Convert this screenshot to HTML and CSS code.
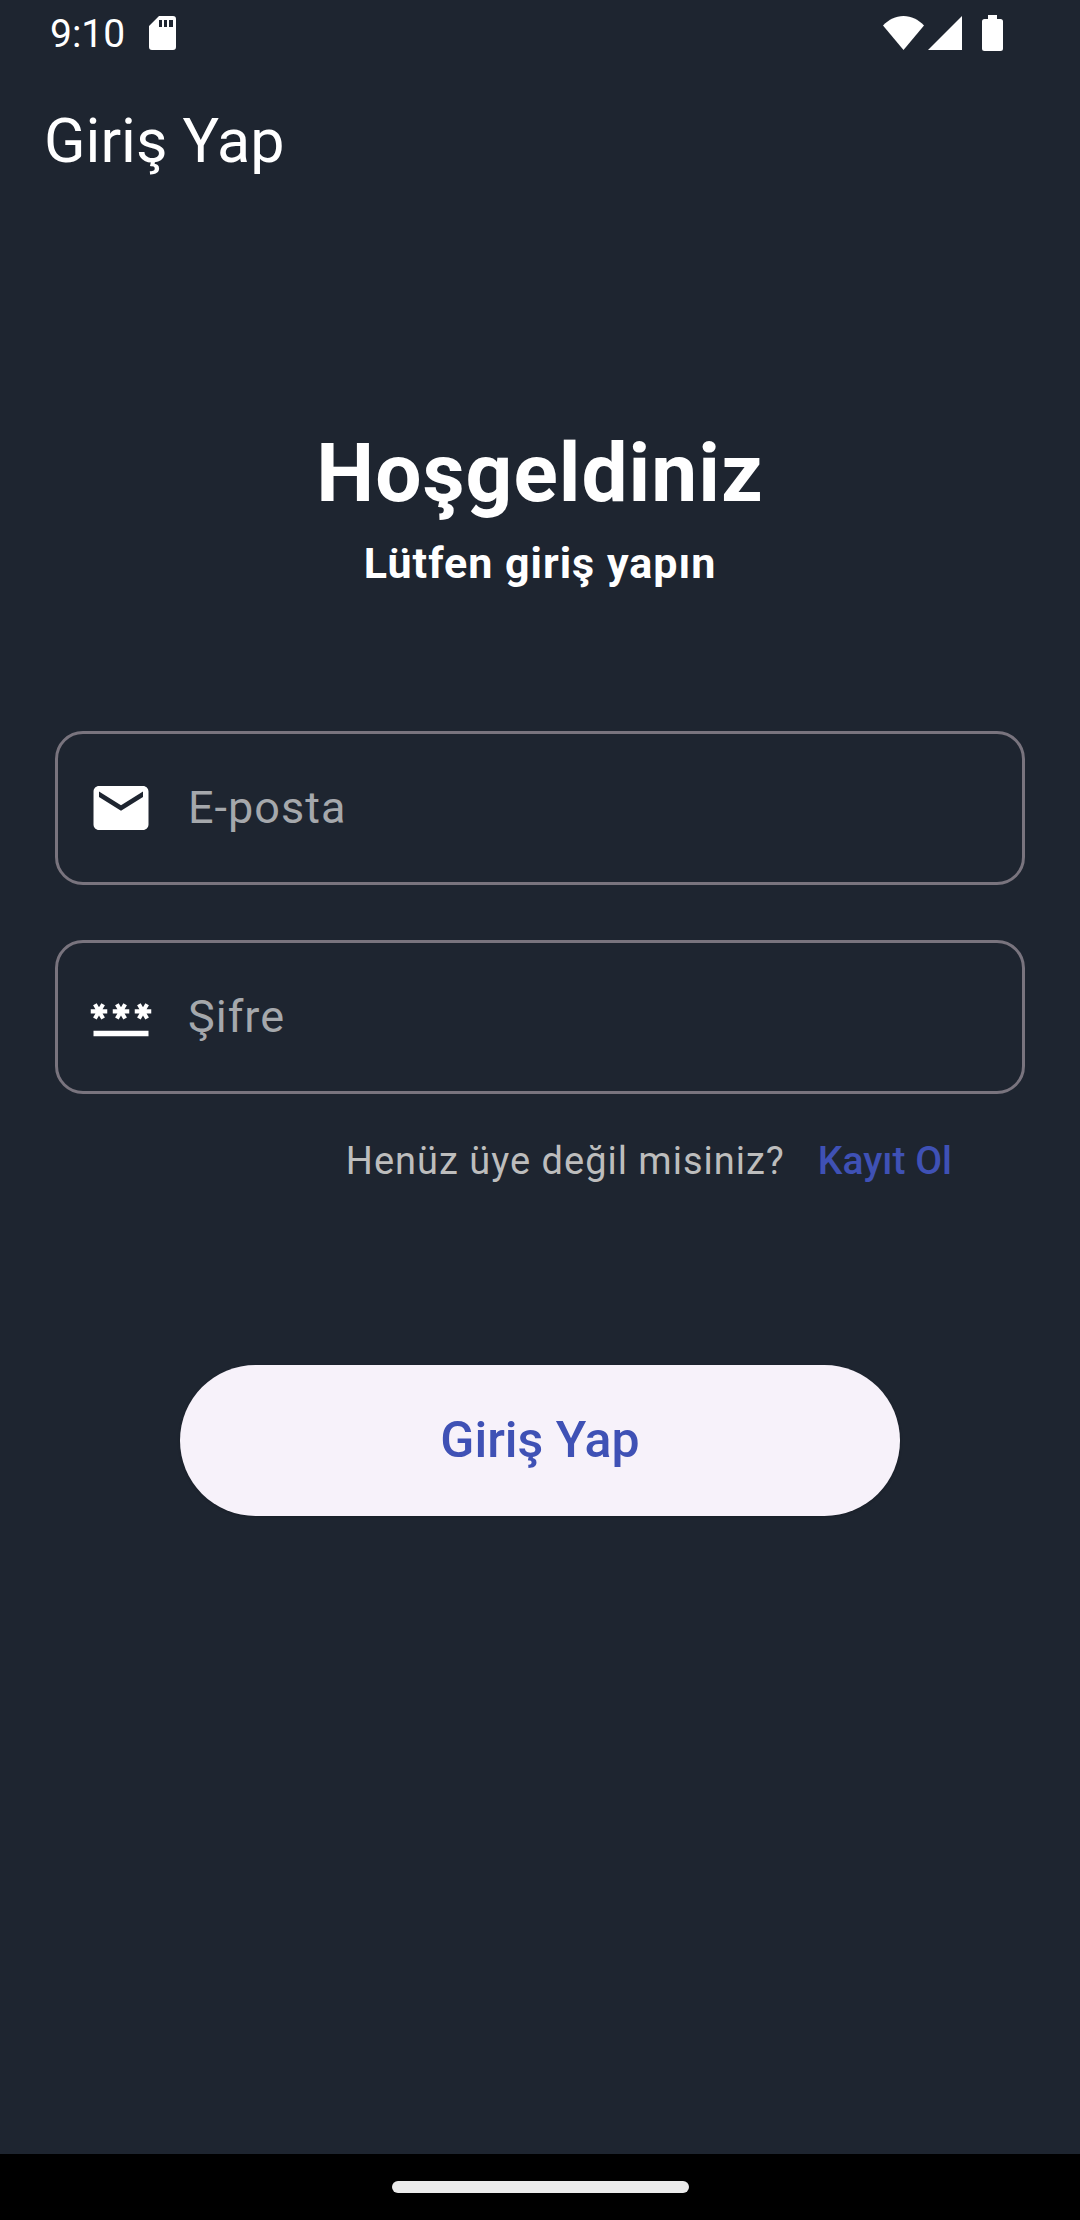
FILE: index.html
```html
<!DOCTYPE html>
<html lang="tr">
<head>
  <meta charset="utf-8">
  <meta name="viewport" content="width=device-width, initial-scale=1">
  <title>Giriş Yap</title>
  <link rel="stylesheet" href="styles.css">
</head>
<body>
  <div class="screen">
    <div class="status-bar">
      <div class="status-left">
        <span class="clock">9:10</span>
        <svg class="icon-sd" viewBox="0 0 27 34" aria-hidden="true">
          <path fill="currentColor" fill-rule="evenodd" d="M10 0H24Q27 0 27 3V31Q27 34 24 34H3Q0 34 0 31V10ZM10 4V11H13V4ZM15 4V11H18V4ZM20 4V11H24V4Z"/>
        </svg>
      </div>
      <div class="status-right">
        <svg class="icon-wifi" viewBox="0 0 41 34" aria-hidden="true">
          <path fill="currentColor" d="M20.500 34L0 9.500C6 3.500 12.500 0 20.500 0S35 3.500 41 9.500Z"/>
        </svg>
        <svg class="icon-signal" viewBox="0 0 34 34" aria-hidden="true">
          <path fill="currentColor" d="M0 34L34 0V34Z"/>
        </svg>
        <svg class="icon-battery" viewBox="0 0 21 36" aria-hidden="true">
          <path fill="currentColor" d="M6 0H15V4H18.500Q21 4 21 6.500V33.500Q21 36 18.500 36H2.500Q0 36 0 33.500V6.500Q0 4 2.500 4H6Z"/>
        </svg>
      </div>
    </div>

    <header class="app-bar">
      <span class="app-title">Giriş Yap</span>
    </header>

    <main class="content">
      <h1 class="welcome">Hoşgeldiniz</h1>
      <p class="subtitle">Lütfen giriş yapın</p>

      <form class="login-form">
        <label class="field">
          <svg class="field-icon" viewBox="0 0 24 24" role="img" aria-label="E-posta">
            <path fill="currentColor" d="M20 4H4c-1.100 0-1.990.9-1.990 2L2 18c0 1.100.9 2 2 2h16c1.100 0 2-.9 2-2V6c0-1.100-.9-2-2-2zm0 4l-8 5-8-5V6l8 5 8-5v2z"/>
          </svg>
          <input class="field-input" type="email" placeholder="E-posta">
        </label>
        <label class="field">
          <svg class="field-icon" viewBox="0 0 24 24" role="img" aria-label="Şifre">
            <path fill="currentColor" d="M2 17h20v2H2v-2zm1.150-4.050L4 11.470l.85 1.480 1.300-.75-.85-1.480H7v-1.500H5.300l.85-1.470L4.850 7 4 8.470 3.150 7l-1.300.75.85 1.470H1v1.500h1.700l-.85 1.480 1.300.75zm6.700-.75l1.300.75.85-1.480.85 1.480 1.300-.75-.85-1.480H15v-1.500h-1.700l.85-1.470-1.300-.75L12 8.470 11.150 7l-1.300.75.85 1.470H9v1.500h1.700l-.85 1.480zM23 9.220h-1.700l.85-1.470-1.300-.75L20 8.470 19.150 7l-1.300.75.85 1.470H17v1.500h1.700l-.85 1.480 1.300.75.85-1.480.85 1.480 1.300-.75-.85-1.480H23v-1.500z"/>
          </svg>
          <input class="field-input" type="password" placeholder="Şifre">
        </label>
        <p class="signup">
          <span>Henüz üye değil misiniz?</span>
          <a class="signup-link" href="#">Kayıt Ol</a>
        </p>
        <button class="submit" type="submit">Giriş Yap</button>
      </form>
    </main>

    <div class="nav-bar"><div class="nav-handle"></div></div>
  </div>
</body>
</html>
```
FILE: styles.css
```css
* {
  box-sizing: border-box;
}

body {
  margin: 0;
  background: #1e2530;
  color: #fff;
  font-family: Roboto, "Noto Sans", sans-serif;
}

.screen {
  display: flex;
  flex-direction: column;
  min-height: 100vh;
}

/* System status bar */
.status-bar {
  display: flex;
  justify-content: space-between;
  height: 66px;
  padding: 0 77px 0 50px;
}

.status-left,
.status-right {
  display: flex;
  align-items: center;
  height: 66px;
}

.status-left {
  gap: 24px;
}

.clock {
  padding-top: 2px;
  font-size: 39px;
  line-height: 46px;
}

.icon-sd {
  width: 27px;
  height: 34px;
}

.icon-wifi {
  width: 41px;
  height: 34px;
  margin-right: 4px;
}

.icon-signal {
  width: 34px;
  height: 34px;
  margin-right: 20px;
}

.icon-battery {
  width: 21px;
  height: 36px;
}

/* App bar */
.app-bar {
  display: flex;
  align-items: center;
  height: 150px;
  padding: 0 44px;
}

.app-title {
  font-size: 61px;
  line-height: 76px;
}

/* Login content */
.content {
  flex: 1;
  padding: 209px 55px 55px;
}

.welcome {
  margin: 0 0 16px;
  font-size: 82px;
  font-weight: 700;
  line-height: 96px;
  letter-spacing: 1px;
  text-align: center;
}

.subtitle {
  margin: 0 0 142px;
  font-size: 43px;
  font-weight: 700;
  line-height: 52px;
  letter-spacing: 1px;
  text-align: center;
}

.login-form {
  display: flex;
  flex-direction: column;
}

.field {
  display: flex;
  align-items: center;
  gap: 34px;
  height: 154px;
  margin-bottom: 55px;
  padding: 0 30px;
  border: 3px solid #79747e;
  border-radius: 28px;
}

.field + .field {
  margin-bottom: 44px;
}

.field-icon {
  flex: none;
  width: 66px;
  height: 66px;
}

.field-input {
  flex: 1;
  min-width: 0;
  padding: 0;
  border: 0;
  outline: 0;
  background: transparent;
  color: #fff;
  font: inherit;
  font-size: 45px;
  line-height: 66px;
  letter-spacing: 1px;
}

.field-input::placeholder {
  color: #a5a8ac;
  opacity: 1;
}

.signup {
  display: flex;
  align-items: baseline;
  justify-content: flex-end;
  gap: 33px;
  margin: 0 0 181px;
  padding-right: 73px;
  color: #bdbdbd;
  font-size: 38px;
  line-height: 46px;
  letter-spacing: 1px;
}

.signup-link {
  color: #3f51b5;
  font-size: 39px;
  font-weight: 500;
  letter-spacing: 0;
  text-decoration: none;
}

.submit {
  align-self: center;
  width: 720px;
  max-width: 100%;
  height: 151px;
  padding: 0 0 2px;
  border: 0;
  border-radius: 76px;
  background: #f7f2fa;
  box-shadow: 0 1px 3px rgba(0, 0, 0, 0.2);
  color: #3f51b5;
  font: inherit;
  font-size: 50px;
  font-weight: 500;
}

/* System navigation bar */
.nav-bar {
  display: flex;
  align-items: center;
  justify-content: center;
  height: 66px;
  background: #000;
}

.nav-handle {
  width: 297px;
  height: 12px;
  border-radius: 6px;
  background: #ebebeb;
}
```
